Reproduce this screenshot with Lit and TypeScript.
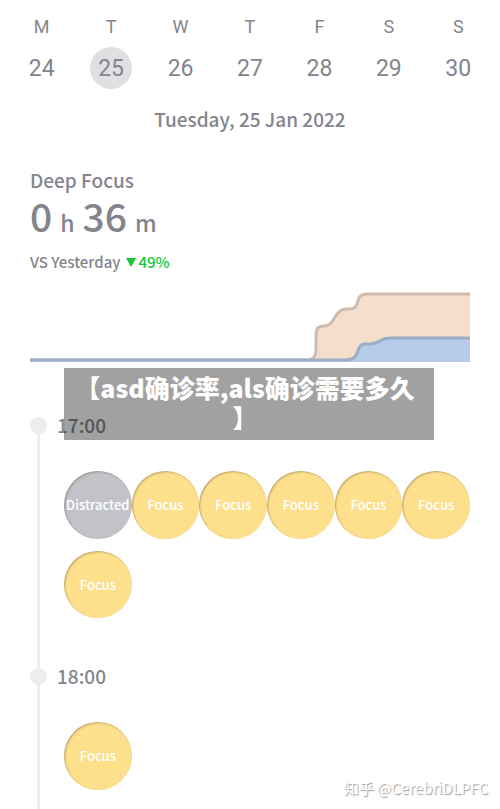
import { LitElement, html, css } from "lit";
import { customElement, property, state } from "lit/decorators.js";
import { classMap } from "lit/directives/class-map.js";

interface Day {
  letter: string;
  date: number;
}

interface Hour {
  time: string;
  sessions: string[];
}

const DAYS: Day[] = [
  { letter: "M", date: 24 },
  { letter: "T", date: 25 },
  { letter: "W", date: 26 },
  { letter: "T", date: 27 },
  { letter: "F", date: 28 },
  { letter: "S", date: 29 },
  { letter: "S", date: 30 },
];

const HOURS: Hour[] = [
  {
    time: "17:00",
    sessions: [
      "Distracted",
      "Focus",
      "Focus",
      "Focus",
      "Focus",
      "Focus",
      "Focus",
    ],
  },
  { time: "18:00", sessions: ["Focus"] },
];

@customElement("week-strip")
export class WeekStrip extends LitElement {
  static styles = css`
    :host {
      display: block;
      padding: 16px 7px 0;
      font-family: Roboto, "Liberation Sans", sans-serif;
    }

    .week {
      display: grid;
      grid-template-columns: repeat(7, 1fr);
      justify-items: center;
      row-gap: 9px;
    }

    .letter {
      font-size: 18px;
      line-height: 22px;
    }

    .date {
      width: 42px;
      height: 42px;
      padding: 2px 0 0;
      border: 0;
      border-radius: 50%;
      background: none;
      color: inherit;
      font: inherit;
      font-size: 23px;
      line-height: 40px;
      cursor: pointer;
    }

    .date.selected {
      background: #e0e0e2;
    }
  `;

  @property({ type: Array }) days: Day[] = [];

  @state() private selected = 25;

  render() {
    return html`
      <div class="week">
        ${this.days.map((day) => html`<span class="letter">${day.letter}</span>`)}
        ${this.days.map(
          (day) => html`
            <button
              class=${classMap({
                date: true,
                selected: day.date === this.selected,
              })}
              @click=${() => (this.selected = day.date)}
            >
              ${day.date}
            </button>
          `
        )}
      </div>
    `;
  }
}

@customElement("focus-chart")
export class FocusChart extends LitElement {
  static styles = css`
    :host {
      display: block;
    }

    .chart {
      display: block;
      width: 100%;
    }

    .line {
      fill: none;
      stroke-width: 3;
    }

    .today {
      fill: #f6decd;
    }

    .today-line {
      stroke: #cdbbb0;
    }

    .previous {
      fill: #b7cbea;
    }

    .previous-line {
      stroke: #9cacc4;
    }
  `;

  render() {
    const today =
      "M0 70H276C284 70 286 66 286 59V46C286 38 288 36 294 36C306 36 303 19 317 19H320C332 19 323 4 337 4H440";
    const previous =
      "M0 70H315C333 70 324 54 335 54H340C350 54 349 48 360 48H440";

    return html`
      <svg class="chart" viewBox="0 0 440 72" aria-hidden="true">
        <path class="today" d="${today}V72H0Z" />
        <path class="line today-line" d=${today} />
        <path class="previous" d="${previous}V72H0Z" />
        <path class="line previous-line" d=${previous} />
      </svg>
    `;
  }
}

@customElement("hour-block")
export class HourBlock extends LitElement {
  static styles = css`
    :host {
      display: block;
    }

    .head {
      display: flex;
      align-items: center;
      gap: 10px;
      height: 34px;
    }

    .dot {
      width: 17px;
      height: 17px;
      border-radius: 50%;
      background: #ededed;
    }

    .time {
      font-size: 19px;
      line-height: 34px;
      font-weight: 500;
    }

    .sessions {
      display: grid;
      grid-template-columns: repeat(6, 1fr);
      row-gap: 12px;
      padding: 29px 0 0 34px;
    }

    .session {
      display: flex;
      align-items: center;
      justify-content: center;
      aspect-ratio: 1;
      min-width: 0;
      border-radius: 50%;
      background: #fee08c;
      box-shadow: inset 1px 1px 2px rgba(90, 80, 50, 0.4);
      color: #fff;
      font-size: 13px;
      line-height: 20px;
      font-weight: 500;
    }

    .session.distracted {
      background: #c2c3c8;
    }
  `;

  @property() time = "";
  @property({ type: Array }) sessions: string[] = [];

  render() {
    return html`
      <div class="head">
        <span class="dot"></span>
        <span class="time">${this.time}</span>
      </div>
      <div class="sessions">
        ${this.sessions.map(
          (name) => html`
            <div
              class=${classMap({
                session: true,
                distracted: name === "Distracted",
              })}
            >
              ${name}
            </div>
          `
        )}
      </div>
    `;
  }
}

@customElement("app-root")
export class AppRoot extends LitElement {
  static styles = css`
    :host {
      display: flex;
      flex-direction: column;
      position: relative;
      min-height: 100vh;
      background: #fff;
      color: #84848d;
      font-family: "Noto Sans CJK SC", "Noto Sans", sans-serif;
    }

    .title {
      margin: 16px 0 0;
      text-align: center;
      font-size: 19px;
      line-height: 28px;
      font-weight: 500;
    }

    .summary {
      padding: 33px 30px 0;
    }

    .label {
      margin: 0;
      font-size: 19px;
      line-height: 28px;
      font-weight: 500;
    }

    .total {
      display: flex;
      align-items: baseline;
      gap: 8px;
      font-size: 23px;
      line-height: 24px;
      font-weight: 500;
    }

    .number {
      font-size: 39px;
      line-height: 42px;
    }

    .versus {
      display: flex;
      align-items: center;
      gap: 5px;
      margin: 16px 0 18px;
      font-size: 15px;
      line-height: 20px;
      font-weight: 500;
    }

    .change {
      display: flex;
      align-items: center;
      gap: 3px;
      color: #14c832;
    }

    .arrow {
      width: 10px;
      height: 9px;
      fill: currentColor;
    }

    .timeline {
      display: flex;
      flex: 1;
      flex-direction: column;
      gap: 41px;
      margin-top: 46px;
      padding: 0 30px 19px;
      background: linear-gradient(#ededed, #ededed) 37px 17px / 3px 100%
        no-repeat;
    }

    .banner {
      position: absolute;
      top: 368px;
      left: 64px;
      right: 66px;
      box-sizing: border-box;
      padding: 4px 16px 8px 8px;
      background: rgba(0, 0, 0, 0.37);
      color: #fff;
      text-align: center;
      font-size: 25px;
      line-height: 30px;
      font-weight: 900;
      line-break: anywhere;
    }

    .watermark {
      position: absolute;
      right: 12px;
      bottom: 10px;
      color: #fff;
      font-size: 15px;
      line-height: 22px;
      text-shadow: 1px 1px 1px rgba(0, 0, 0, 0.4);
    }
  `;

  render() {
    return html`
      <week-strip .days=${DAYS}></week-strip>
      <h1 class="title">Tuesday, 25 Jan 2022</h1>
      <section class="summary">
        <h2 class="label">Deep Focus</h2>
        <div class="total">
          <span class="number">0</span>
          <span>h</span>
          <span class="number">36</span>
          <span>m</span>
        </div>
        <div class="versus">
          <span>VS Yesterday</span>
          <span class="change">
            <svg class="arrow" viewBox="0 0 10 9" aria-hidden="true">
              <path d="M0 0H10L5 9Z" />
            </svg>
            49%
          </span>
        </div>
        <focus-chart></focus-chart>
      </section>
      <main class="timeline">
        ${HOURS.map(
          (hour) => html`
            <hour-block
              .time=${hour.time}
              .sessions=${hour.sessions}
            ></hour-block>
          `
        )}
      </main>
      <div class="banner">【asd确诊率,als确诊需要多久】</div>
      <div class="watermark">知乎 @CerebriDLPFC</div>
    `;
  }
}
